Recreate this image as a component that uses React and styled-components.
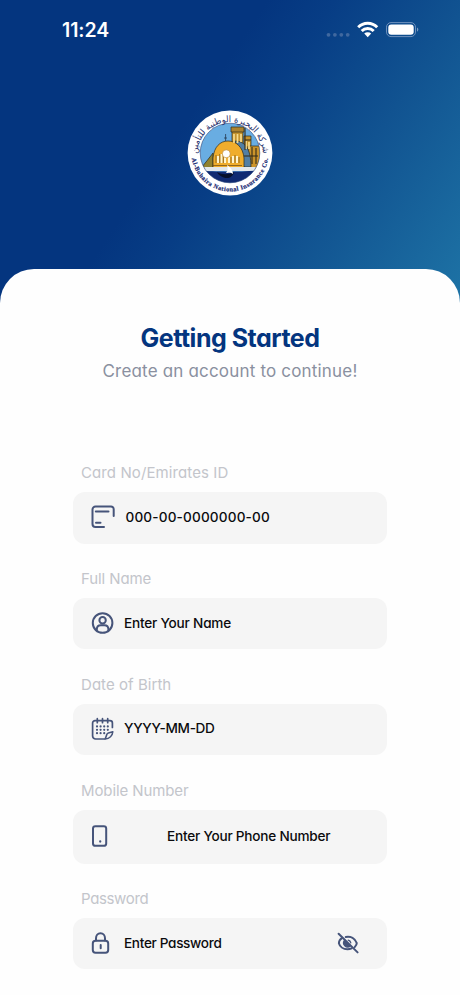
import React from "react";
import styled, { createGlobalStyle } from "styled-components";

const GlobalStyle = createGlobalStyle`
  * { box-sizing: border-box; }
  body { margin: 0; background: #fefefe; }
`;

const Screen = styled.main`
  width: 460px;
  height: 995px;
  overflow: hidden;
  display: flex;
  flex-direction: column;
  font-family: Inter, "Open Sans", sans-serif;
  font-feature-settings: "cv11", "ss03";
  background: linear-gradient(124deg, #04357f 40%, #073d85 50%, #115391 70%, #1e74a6 100%) 0 0 / 460px 310px no-repeat;
`;

const StatusBar = styled.header`
  height: 60px;
  padding: 0 41px 0 62px;
  display: flex;
  align-items: center;
  justify-content: space-between;
  flex: none;
`;

const Clock = styled.time`
  color: #fff;
  font-size: 19.5px;
  font-weight: 600;
  letter-spacing: -0.1px;
  font-feature-settings: normal;
`;

const StatusIcons = styled.svg`
  width: 94px;
  height: 20px;
  display: block;
`;

const Brand = styled.div`
  height: 208.5px;
  padding-top: 49.5px;
  display: flex;
  justify-content: center;
  flex: none;
`;

const Emblem = styled.svg`
  width: 86px;
  height: 86px;
`;

const Sheet = styled.section`
  flex: 1;
  background: #fefefe;
  border-radius: 34px 34px 0 0;
  padding: 53.5px 73px 0;
`;

const Title = styled.h1`
  margin: 0;
  color: #04357f;
  font-size: 25px;
  line-height: 32px;
  font-weight: 700;
  letter-spacing: -0.5px;
  text-align: center;
  white-space: nowrap;
`;

const Subtitle = styled.p`
  margin: 4.5px 0 0;
  color: #8a90a0;
  font-size: 17px;
  line-height: 24px;
  letter-spacing: 0.18px;
  text-align: center;
  white-space: nowrap;
`;

const Form = styled.form`
  margin-top: 79px;
  display: flex;
  flex-direction: column;
`;

const Group = styled.div`
  height: ${(p) => p.$height}px;
`;

const Label = styled.label`
  display: block;
  height: 30px;
  padding-left: 8px;
  color: #c3c5cb;
  font-size: 15px;
  line-height: 22px;
  letter-spacing: ${(p) => p.$track}px;
  white-space: nowrap;
`;

const Field = styled.div`
  width: 314px;
  height: ${(p) => p.$height}px;
  padding: 0 27px 1px 18px;
  border-radius: 12px;
  background: #f5f5f5;
  display: flex;
  align-items: center;
`;

const Placeholder = styled.span`
  flex: 1;
  margin-left: ${(p) => p.$indent}px;
  padding-bottom: 1px;
  color: #0b0b0d;
  font-size: 13.6px;
  line-height: 20px;
  font-weight: 500;
  letter-spacing: ${(p) => p.$track}px;
  white-space: nowrap;
`;

const Glyph = styled.svg`
  width: 24px;
  height: 24px;
  flex: none;
  fill: none;
  stroke: #46547a;
  stroke-width: 2;
  stroke-linecap: round;
  stroke-linejoin: round;
`;

const CardIcon = () => (
  <Glyph viewBox="0 0 24 24">
    <path d="M13 22H4.5A3 3 0 0 1 1.5 19V4.5a3 3 0 0 1 3-3H20a2.7 2.7 0 0 1 2.7 2.7V11" />
    <path d="M4.8 6.6H17.5M5 17.8h4.5" />
  </Glyph>
);

const UserIcon = () => (
  <Glyph viewBox="0 0 24 24">
    <circle cx="11.6" cy="12" r="9.8" />
    <circle cx="11.6" cy="9.3" r="3.2" />
    <path d="M5.8 19.2v-.8c0-2.5 1.7-4.2 4-4.2h3.6c2.3 0 4 1.7 4 4.2v.8" />
  </Glyph>
);

const CalendarIcon = () => (
  <Glyph viewBox="0 0 24 24">
    <path d="M13.5 22H4.6a3 3 0 0 1-3-3V6a2.4 2.4 0 0 1 2.4-2.4h15A2.4 2.4 0 0 1 21.4 6v4.5" strokeWidth="1.7" />
    <path d="M6.3 1.7v4M11.5 1.7v4M16.7 1.7v4" strokeWidth="1.7" />
    <path d="M14.2 22l1.6-4.6a2.4 2.4 0 0 1 1.6-1.5l4.4-1.2c-.3 3.9-3.4 6.9-7.6 7.3z" strokeWidth="1.6" />
    <path d="M6 9.4h.01M9.6 9.4h.01M13.2 9.4h.01M16.8 9.4h.01M6 12.8h.01M9.6 12.8h.01M13.2 12.8h.01M16.8 12.8h.01M6 16.2h.01M9.6 16.2h.01M13.2 16.2h.01" strokeWidth="2.2" />
  </Glyph>
);

const PhoneIcon = () => (
  <Glyph viewBox="0 0 24 24">
    <rect x="2" y="2.2" width="13.2" height="19.6" rx="2.4" />
    <path d="M9.2 17.5h.01" strokeWidth="2.3" />
  </Glyph>
);

const LockIcon = () => (
  <Glyph viewBox="0 0 24 24">
    <rect x="1.8" y="9.8" width="15.4" height="12" rx="2.7" />
    <path d="M5 9.6V7.2C5 4.2 6.9 2.2 9.5 2.2S14 4.2 14 7.2v2.4M9.7 14v3.2" />
  </Glyph>
);

const EyeOffIcon = () => (
  <Glyph viewBox="0 0 24 24">
    <path d="M2.6 2.7 21.6 21.4" />
    <path d="M6.2 6.8C4 8.2 2.9 10.5 2.9 12.2c.9 3.5 4.3 6.1 8.5 6.1 1.7 0 3-.3 4.2-.9M9.7 6c5.1-1 9.3 1.6 11.1 6.1 0 1.5-.9 2.8-2.1 4" />
    <path d="M8.4 9.3a4.2 4.2 0 0 0 5.8 5.9zM12.2 9.1c1.5.3 2.3 1.2 2.6 2.7" fill="#46547a" strokeWidth="1.3" />
  </Glyph>
);

const AlBuhairaEmblem = () => (
  <Emblem viewBox="-43 -43 86 86" role="img" aria-label="Al-Buhaira National Insurance Co.">
    <defs>
      <clipPath id="scene"><circle r="29.8" /></clipPath>
      <path id="arcTop" d="M-33 2A33 33 0 0 1 33 2" />
      <path id="arcBottom" d="M-38.5 0A38.5 38.5 0 0 0 38.5 0" />
    </defs>
    <circle r="42.4" fill="#fff" />
    <g clipPath="url(#scene)">
      <rect x="-30" y="-30" width="60" height="60" fill="#69ade2" />
      <g stroke="#2d2b1e" strokeWidth=".7">
        <path d="M2-25h11v27H2z" fill="#c4932d" />
        <path d="M1-26h13v5H1z" fill="#ad832e" />
        <path d="M14-17h7v17h-7z" fill="#c4932d" />
        <path d="M18-7h13v22H18z" fill="#cb942b" />
        <path d="M5-12C15-12 21-4 21 14h-7z" fill="#517fa5" />
        <path d="M-24 9l7-9V15h-12z" fill="#8f812f" />
        <path d="M-17 15V5C-16-6-10-12-2-12S13-6 14 5v10z" fill="#f0ad2c" />
      </g>
      <path d="M4-19v9M7.5-19v9M11-19v8M16-12v8M19-11v7" stroke="#f7dc8c" strokeWidth="1.7" />
      <path d="M15-25v22M22-6v17M26-5v16M14 3h14M15-13h6" stroke="#332a18" strokeWidth="1.1" />
      <path d="M-12 3v7M-8.5 1v9M-5 3v7M-1 4v6M3 3v7M7 3v7" stroke="#fff5cf" strokeWidth="2.2" />
      <path d="M-14 2v8M-10.2 1v9M-6.7 2v8M1 4v6M5 2v8M9 4v6M-18 12.5h30" stroke="#6a4b16" strokeWidth=".7" />
      <circle cx="-3.7" cy=".8" r="4" fill="#fff" stroke="#b77b19" strokeWidth=".6" />
      <path d="M-4.4-12v-7M-6-15h3" stroke="#263a52" strokeWidth=".8" />
      <path d="M-30 14h60v4h-60z" fill="#e3e8eb" />
      <path d="M-30 17.5c14 1.5 40 1.5 60 0V31h-60z" fill="#102a72" />
      <path d="M-13 19c5 3 12 3 17 0-1 4-4 6-7 6s-8-2-10-6z" fill="#07102b" />
      <path d="M-3 12c3 2 6 5 6 9-2-2-6-1-7-1 2-2 2-5 1-8z" fill="#fff" />
    </g>
    <circle r="29.8" fill="none" stroke="#344777" strokeWidth=".6" />
    <text fill="#1f2f6c" fontFamily="DejaVu Sans, sans-serif" fontSize="9" textAnchor="middle" direction="rtl">
      <textPath href="#arcTop" startOffset="50%" textLength="101" lengthAdjust="spacingAndGlyphs">شركة البحيرة الوطنية للتأمين</textPath>
    </text>
    <text fill="#182a72" stroke="#182a72" strokeWidth=".2" fontFamily="Liberation Serif, serif" fontWeight="700" fontSize="6.3" textAnchor="middle">
      <textPath href="#arcBottom" startOffset="50%" textLength="110">Al-Buhaira National Insurance Co.</textPath>
    </text>
  </Emblem>
);

const fields = [
  { label: "Card No/Emirates ID", labelTrack: 0.1, text: "000-00-0000000-00", track: 0.16, indent: 10.5, icon: CardIcon, group: 106.5, height: 52 },
  { label: "Full Name", labelTrack: -0.1, text: "Enter Your Name", track: -0.2, indent: 9, icon: UserIcon, group: 105.5, height: 51 },
  { label: "Date of Birth", labelTrack: 0.05, text: "YYYY-MM-DD", track: -0.33, indent: 9, icon: CalendarIcon, group: 106, height: 51.5 },
  { label: "Mobile Number", labelTrack: -0.1, text: "Enter Your Phone Number", track: -0.22, indent: 52, icon: PhoneIcon, group: 108.5, height: 54 },
  { label: "Password", labelTrack: -0.35, text: "Enter Password", track: -0.33, indent: 9, icon: LockIcon, group: 81, height: 51, secret: true },
];

export default function App() {
  return (
    <Screen>
      <GlobalStyle />
      <StatusBar>
        <Clock>11:24</Clock>
        <StatusIcons viewBox="0 0 94 20">
          <g fill="#40689f">
            <circle cx="3.5" cy="14.8" r="1.9" />
            <circle cx="9.9" cy="14.8" r="1.9" />
            <circle cx="16.3" cy="14.8" r="1.9" />
            <circle cx="22.7" cy="14.8" r="1.9" />
          </g>
          <g fill="none" stroke="#fff" strokeWidth="2.9">
            <path d="M33.2 7.3a13.1 13.1 0 0 1 19 0" />
            <path d="M36.7 11a8.3 8.3 0 0 1 12 0" />
          </g>
          <path d="M42.7 17.2l-3.5-3.6a5 5 0 0 1 7 0z" fill="#fff" />
          <rect x="61.5" y="2.6" width="29" height="14" rx="4.5" fill="none" stroke="#6f91bd" />
          <rect x="63.3" y="4.4" width="25.4" height="10.4" rx="3" fill="#fff" />
          <path d="M92 7.5c1.8.6 1.8 3.6 0 4.2z" fill="#7b9cc1" />
        </StatusIcons>
      </StatusBar>
      <Brand><AlBuhairaEmblem /></Brand>
      <Sheet>
        <Title>Getting Started</Title>
        <Subtitle>Create an account to continue!</Subtitle>
        <Form>
          {fields.map(({ icon: Icon, ...f }) => (
            <Group key={f.label} $height={f.group}>
              <Label $track={f.labelTrack}>{f.label}</Label>
              <Field $height={f.height}>
                <Icon />
                <Placeholder $indent={f.indent} $track={f.track}>{f.text}</Placeholder>
                {f.secret && <EyeOffIcon />}
              </Field>
            </Group>
          ))}
        </Form>
      </Sheet>
    </Screen>
  );
}
